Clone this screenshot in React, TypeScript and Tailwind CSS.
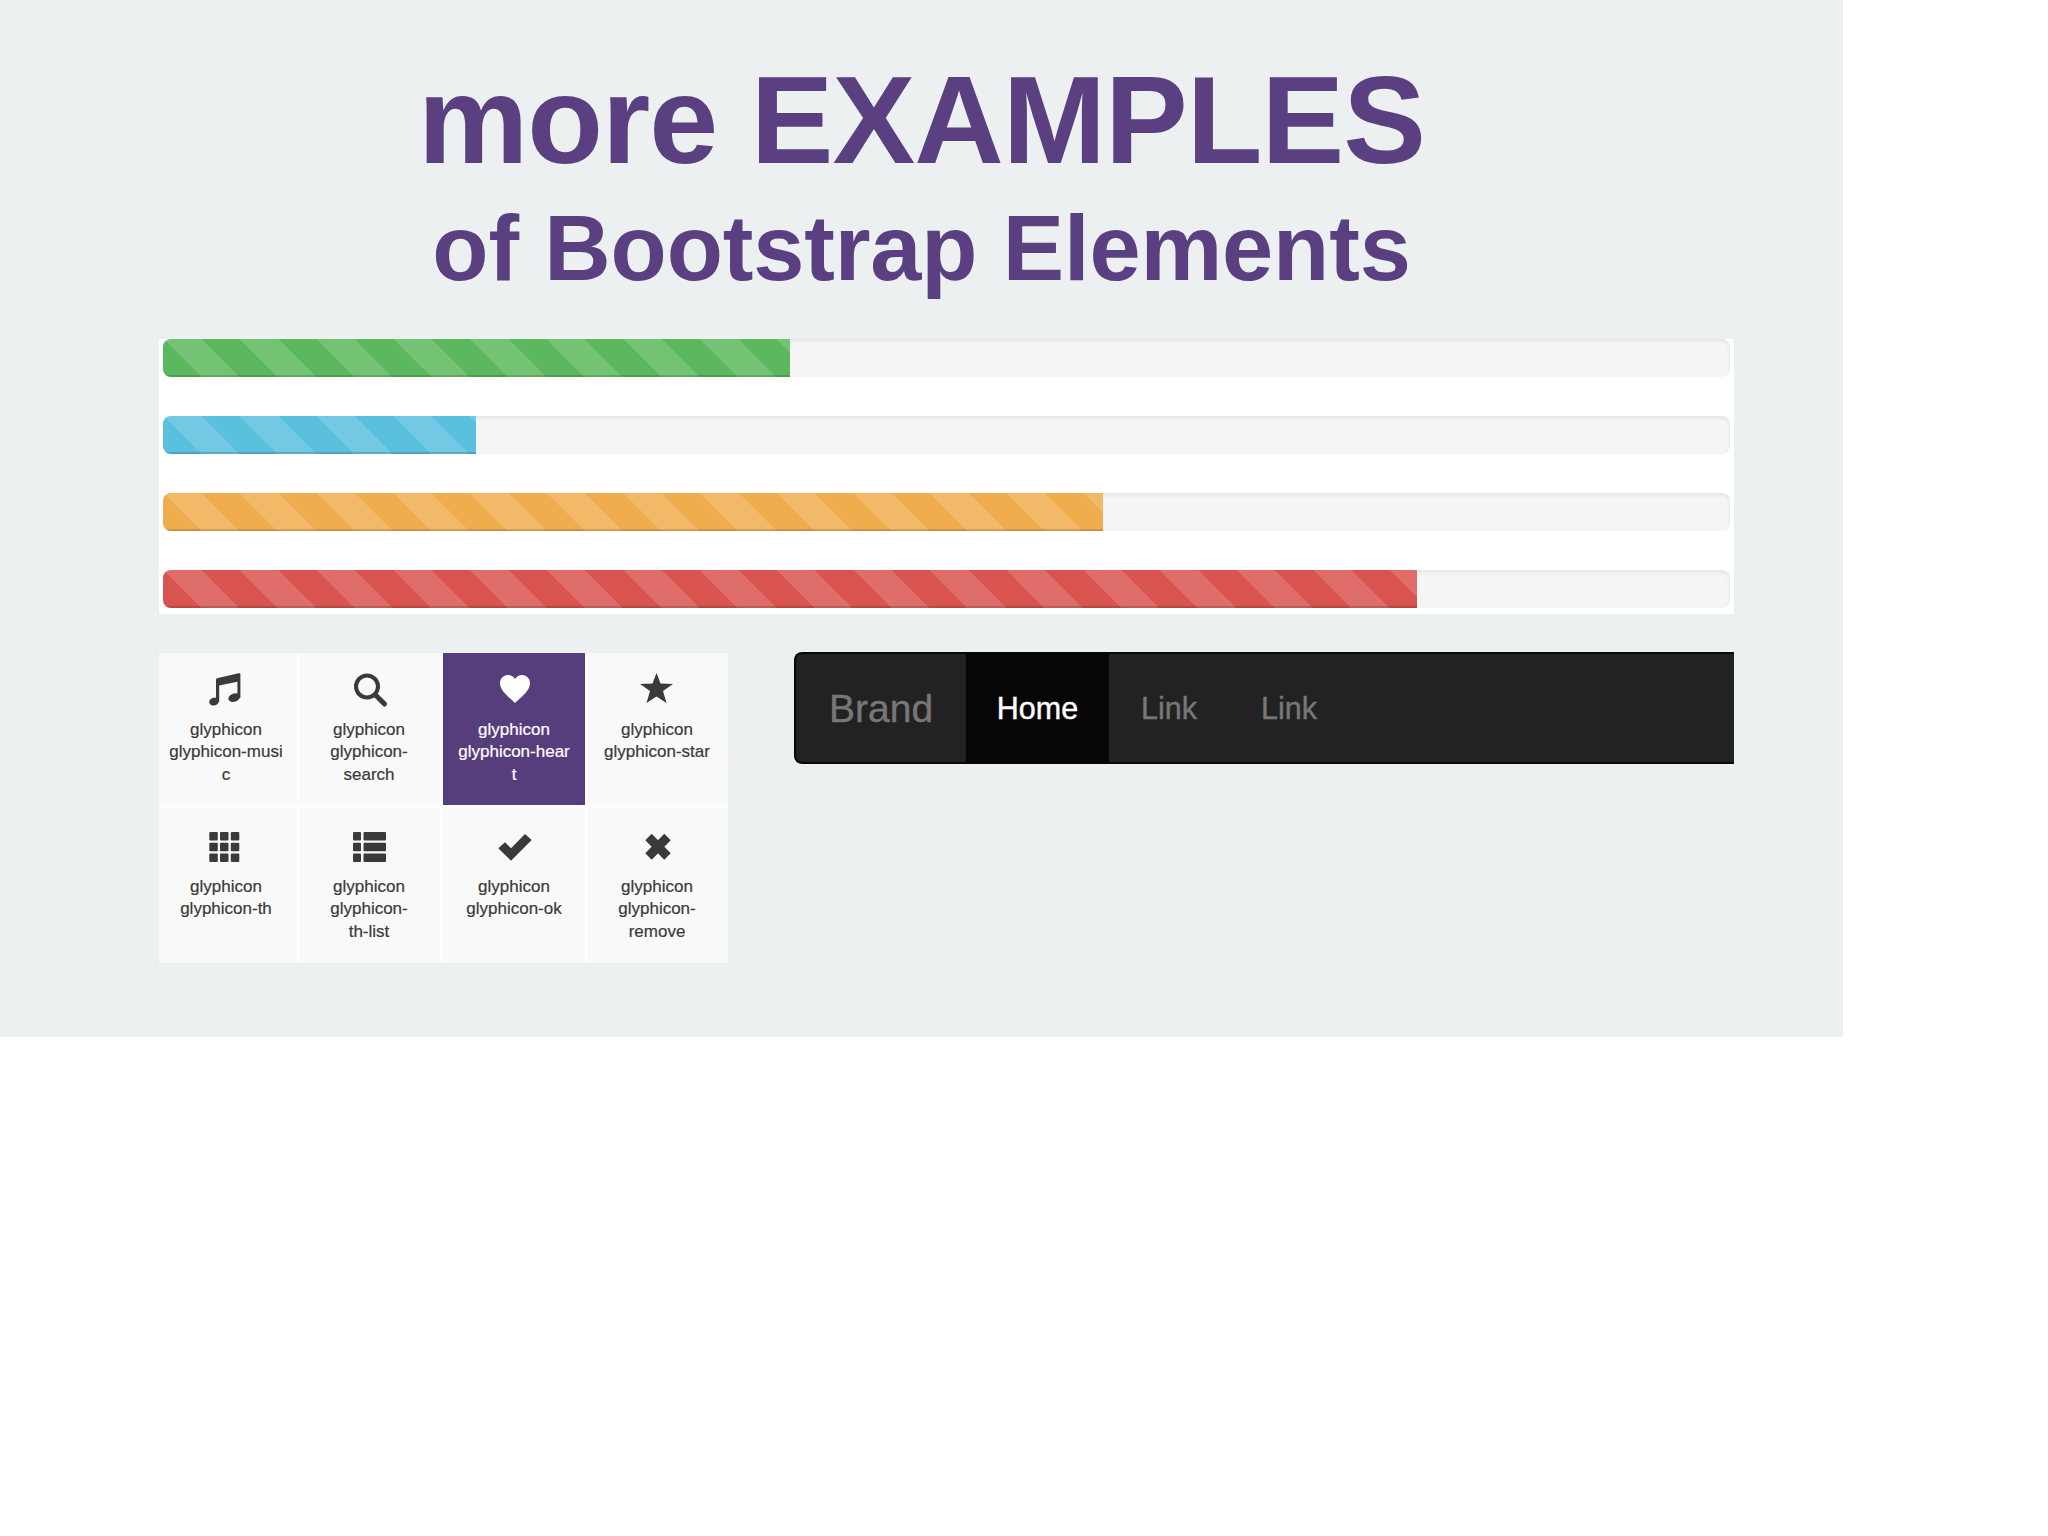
const bars = [
  { fill: "w-[40%] bg-[#5cb85c]" },
  { fill: "w-[20%] bg-[#5bc0de]" },
  { fill: "w-[60%] bg-[#f0ad4e]" },
  { fill: "w-[80%] bg-[#d9534f]" },
];

const MusicIcon = () => (
  <svg viewBox="0 0 40 40" className="w-10 h-10 shrink-0" fill="currentColor">
    <path d="M10 12.5 C10 11 10.5 10.3 12 10 L32.5 5.2 C33.6 5 34.4 5.4 34.4 6.6 V30 H31.4 V13.8 L13.2 17.6 V34 H10 Z" />
    <ellipse cx="8" cy="33.6" rx="4.9" ry="3.9" transform="rotate(-18 8 33.6)" />
    <ellipse cx="28.2" cy="29.6" rx="6" ry="4.1" transform="rotate(-18 28.2 29.6)" />
  </svg>
);

const SearchIcon = () => (
  <svg viewBox="0 0 40 40" className="w-10 h-10 shrink-0" fill="none" stroke="currentColor">
    <circle cx="18" cy="18.5" r="11" strokeWidth="4" />
    <path d="M26.5 27 L35.5 36" strokeWidth="5" strokeLinecap="round" />
  </svg>
);

const HeartIcon = () => (
  <svg viewBox="0 0 40 40" className="w-10 h-10 shrink-0" fill="currentColor">
    <path d="M21 35 C15 29 6 23 6 15 C6 10 10 7 14 7 C17 7 20 9 21 11 C22 9 25 7 28 7 C32 7 36 10 36 15 C36 23 27 29 21 35 Z" />
  </svg>
);

const StarIcon = () => (
  <svg viewBox="0 0 40 40" className="w-10 h-10 shrink-0" fill="currentColor">
    <polygon points="19.5,5 23.5,15.5 36,16 26,23 29.5,35 19.5,28.5 9.5,35 13,23 3,16 15.5,15.5" />
  </svg>
);

const ThIcon = () => (
  <svg viewBox="0 0 40 40" className="w-10 h-10 shrink-0" fill="currentColor">
    {[3.3, 14, 24.8].map((x) =>
      [5, 15.7, 26.5].map((y) => <rect key={`${x}-${y}`} x={x} y={y} width="8.5" height="8.5" rx="1" />)
    )}
  </svg>
);

const ThListIcon = () => (
  <svg viewBox="0 0 40 40" className="w-10 h-10 shrink-0" fill="currentColor">
    {[5, 15.7, 26.5].map((y) => (
      <g key={y}>
        <rect x="4" y={y} width="8" height="8.5" rx="1" />
        <rect x="14.5" y={y} width="22.5" height="8.5" rx="1" />
      </g>
    ))}
  </svg>
);

const OkIcon = () => (
  <svg viewBox="0 0 40 40" className="w-10 h-10 shrink-0" fill="currentColor">
    <polygon points="4.3,21.3 17,33.7 37.7,13 31,7 17,21.3 11,15.3" />
  </svg>
);

const RemoveIcon = () => (
  <svg viewBox="0 0 40 40" className="w-10 h-10 shrink-0" fill="none" stroke="currentColor">
    <path d="M11.5 10 L30.5 29.5 M30.5 10 L11.5 29.5" strokeWidth="9" />
  </svg>
);

const cells = [
  { icon: <MusicIcon />, lines: ["glyphicon", "glyphicon-musi", "c"], box: "pt-[15px] pr-[4px] bg-[#f9f9f9] text-[#3a3a3a]", gap: "mt-[11px]" },
  { icon: <SearchIcon />, lines: ["glyphicon", "glyphicon-", "search"], box: "pt-[15px] pr-[2px] bg-[#f9f9f9] text-[#3a3a3a]", gap: "mt-[11px]" },
  { icon: <HeartIcon />, lines: ["glyphicon", "glyphicon-hear", "t"], box: "pt-[15px] bg-[#563d7c] text-white", gap: "mt-[11px]" },
  { icon: <StarIcon />, lines: ["glyphicon", "glyphicon-star"], box: "pt-[15px] pr-[2px] bg-[#f9f9f9] text-[#3a3a3a]", gap: "mt-[11px]" },
  { icon: <ThIcon />, lines: ["glyphicon", "glyphicon-th"], box: "pt-[19px] pr-[4px] bg-[#f9f9f9] text-[#3a3a3a]", gap: "mt-[9px]" },
  { icon: <ThListIcon />, lines: ["glyphicon", "glyphicon-", "th-list"], box: "pt-[19px] pr-[2px] bg-[#f9f9f9] text-[#3a3a3a]", gap: "mt-[9px]" },
  { icon: <OkIcon />, lines: ["glyphicon", "glyphicon-ok"], box: "pt-[19px] bg-[#f9f9f9] text-[#3a3a3a]", gap: "mt-[9px]" },
  { icon: <RemoveIcon />, lines: ["glyphicon", "glyphicon-", "remove"], box: "pt-[19px] pr-[2px] bg-[#f9f9f9] text-[#3a3a3a]", gap: "mt-[9px]" },
];

export default function App() {
  return (
    <div className="w-[1843px] h-[1037px] bg-[#ecf0f1] font-['Liberation_Sans',Arial,sans-serif] overflow-hidden">
      <div className="flex flex-col items-center pt-[52px] text-[#5a4080] font-bold">
        <h1 className="text-[124px] leading-[136px] tracking-[-1px]">more EXAMPLES</h1>
        <h2 className="text-[92px] leading-[112px] mt-[4px] tracking-[-0.15px]">of Bootstrap Elements</h2>
      </div>

      <div className="ml-[159px] mt-[35px] w-[1575px] bg-white px-[4px] pb-[6px] flex flex-col gap-[39px]">
        {bars.map((bar) => (
          <div
            key={bar.fill}
            className="h-[38px] rounded-[8px] overflow-hidden bg-[#f5f5f5] shadow-[inset_0_2px_4px_rgba(0,0,0,0.08)]"
          >
            <div
              className={`h-full ${bar.fill} bg-[repeating-linear-gradient(45deg,transparent_0,transparent_27.1px,rgba(255,255,255,0.15)_27.1px,rgba(255,255,255,0.15)_54.2px)] shadow-[inset_0_-2px_0_rgba(0,0,0,0.15)]`}
            />
          </div>
        ))}
      </div>

      <div className="ml-[159px] mt-[39px] flex items-start">
        <div className="w-[569px] grid grid-cols-[138px_140px_142px_140px] grid-rows-[152px_155px] gap-[3px] bg-[#fdfdfd]">
          {cells.map((cell) => (
            <div key={cell.lines.join(" ")} className={`flex flex-col items-center ${cell.box}`}>
              {cell.icon}
              <div className={`text-center text-[17px] leading-[22.4px] whitespace-nowrap [-webkit-text-stroke:0.2px] ${cell.gap}`}>
                {cell.lines.map((line) => (
                  <div key={line}>{line}</div>
                ))}
              </div>
            </div>
          ))}
        </div>

        <div className="ml-[66px] -mt-[1px] w-[940px] h-[112px] flex items-stretch bg-[#222] border-2 border-r-0 border-[#080808] rounded-l-[8px] text-[#777] [-webkit-text-stroke:0.4px]">
          <div className="w-[170px] pl-[33px] pt-[3px] flex items-center text-[39px]">Brand</div>
          <div className="w-[143px] pt-[2px] flex items-center justify-center bg-[#060606] text-white text-[30.5px]">Home</div>
          <div className="px-[32px] pt-[2px] flex items-center text-[30.5px]">Link</div>
          <div className="px-[32px] pt-[2px] flex items-center text-[30.5px]">Link</div>
        </div>
      </div>
    </div>
  );
}
